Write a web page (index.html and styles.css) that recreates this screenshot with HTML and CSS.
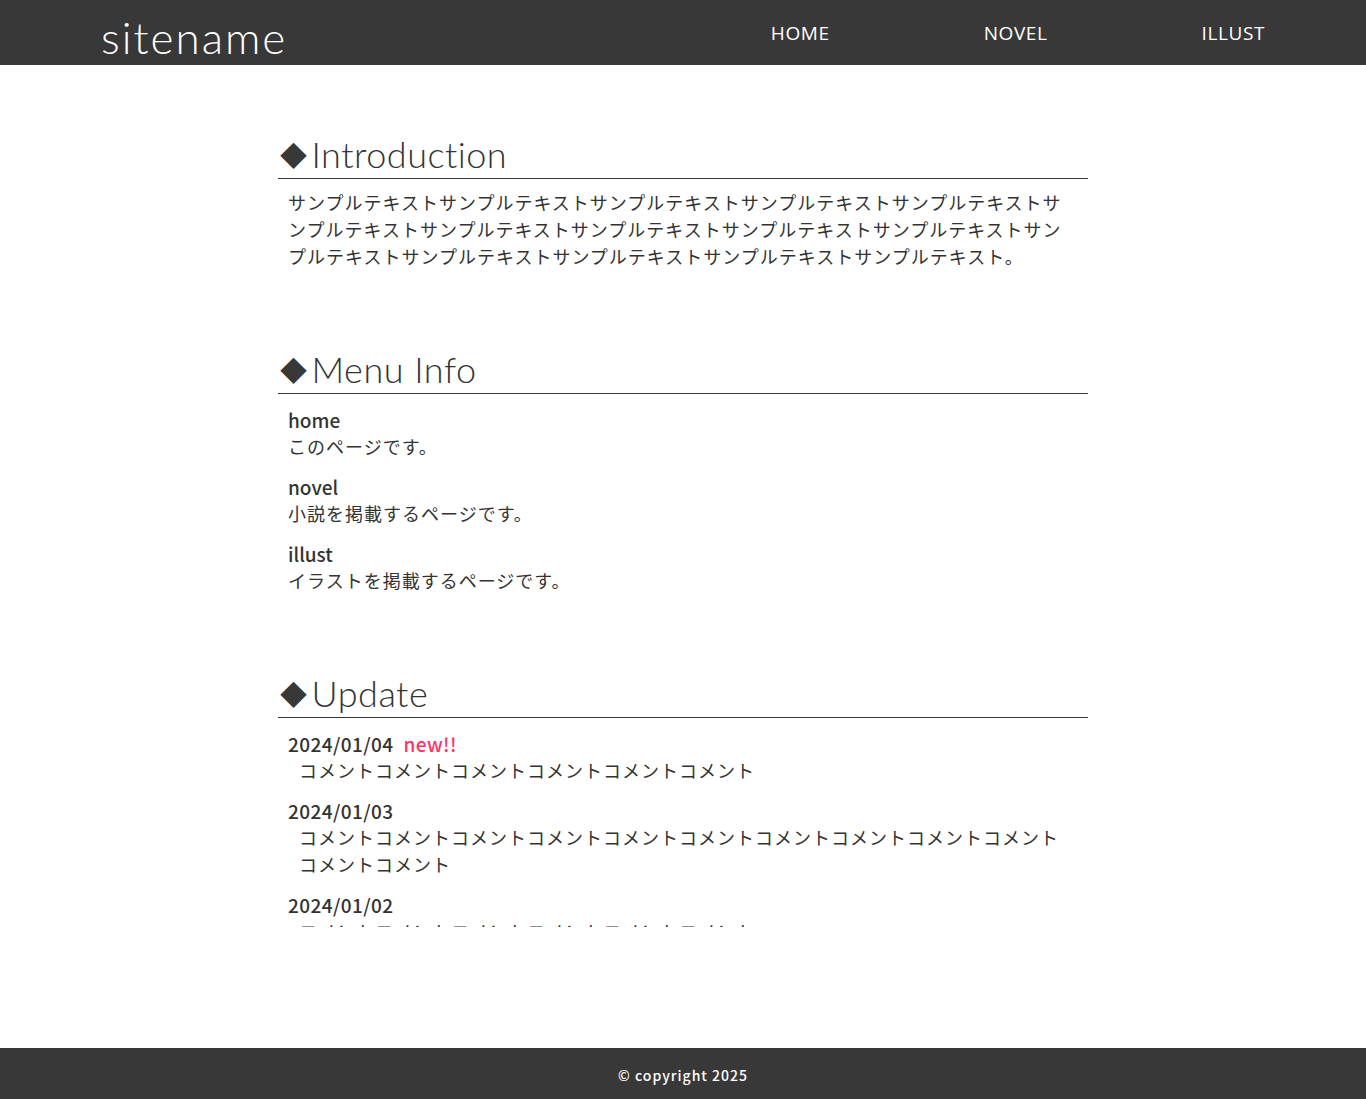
FILE: index.html
```html
<!DOCTYPE html>
<html lang="ja">
<head>
<meta charset="utf-8">
<title>sitename</title>
<link rel="stylesheet" href="styles.css">
</head>
<body>
<header class="site-header">
  <div class="logo">sitename</div>
  <nav class="gnav">
    <a href="#">HOME</a>
    <a href="#">NOVEL</a>
    <a href="#">ILLUST</a>
  </nav>
</header>
<main class="main">
  <section class="sec">
    <h2 class="sec-title"><span class="mark">◆</span>Introduction</h2>
    <p class="intro">サンプルテキストサンプルテキストサンプルテキストサンプルテキストサンプルテキストサンプルテキストサンプルテキストサンプルテキストサンプルテキストサンプルテキストサンプルテキストサンプルテキストサンプルテキストサンプルテキストサンプルテキスト。</p>
  </section>
  <section class="sec">
    <h2 class="sec-title"><span class="mark">◆</span>Menu Info</h2>
    <dl class="menu">
      <div class="item"><dt>home</dt><dd>このページです。</dd></div>
      <div class="item"><dt>novel</dt><dd>小説を掲載するページです。</dd></div>
      <div class="item"><dt>illust</dt><dd>イラストを掲載するページです。</dd></div>
    </dl>
  </section>
  <section class="sec">
    <h2 class="sec-title"><span class="mark">◆</span>Update</h2>
    <div class="updates">
      <div class="item"><div class="date">2024/01/04<span class="new">new!!</span></div><div class="comment">コメントコメントコメントコメントコメントコメント</div></div>
      <div class="item"><div class="date">2024/01/03</div><div class="comment">コメントコメントコメントコメントコメントコメントコメントコメントコメントコメントコメントコメント</div></div>
      <div class="item"><div class="date">2024/01/02</div><div class="comment">コメントコメントコメントコメントコメントコメント</div></div>
    </div>
  </section>
</main>
<footer class="site-footer">© copyright 2025</footer>
</body>
</html>
```
FILE: styles.css
```css
html, body { margin: 0; padding: 0; }
body {
  font-family: "Noto Sans CJK JP", "Noto Sans", sans-serif;
  color: #333;
  background: #fff;
  min-height: 100vh;
  display: flex;
  flex-direction: column;
}
.site-header {
  height: 65px;
  background: #383838;
  display: flex;
  align-items: center;
  justify-content: space-between;
  padding: 0 101px;
  flex-shrink: 0;
}
.logo {
  color: #fff;
  font-family: "Lato", "Noto Sans CJK JP", sans-serif;
  font-size: 44px;
  font-weight: 300;
  letter-spacing: 2px;
  line-height: 1;
  margin-top: 8px;
}
.gnav {
  display: flex;
  gap: 154px;
}
.gnav a {
  color: #fff;
  text-decoration: none;
  font-family: "Open Sans", "Noto Sans", sans-serif;
  font-size: 19px;
  font-weight: 500;
  letter-spacing: 0.6px;
}
.main {
  flex: 1;
  width: 810px;
  margin: 0 auto;
  padding-top: 70px;
}
.sec { margin-bottom: 80px; }
.sec-title {
  margin: 0;
  font-family: "Lato", "Noto Sans CJK JP", sans-serif;
  font-size: 36px;
  font-weight: 300;
  line-height: 38px;
  padding: 0 0 4px 2px;
  border-bottom: 1px solid #383838;
  color: #333;
  letter-spacing: 0.5px;
}
.mark {
  font-family: "Noto Sans CJK JP", sans-serif;
  font-size: 27px;
  display: inline-block;
  vertical-align: 2px;
  margin-right: 4px;
  color: #383838;
}
.intro {
  margin: 10px 0 0;
  padding: 0 10px;
  font-size: 18px;
  line-height: 27px;
  letter-spacing: 1px;
}
.menu { margin: 12px 0 0; padding: 0 10px; }
.item + .item { margin-top: 13px; }
.menu dt {
  font-size: 19px;
  font-weight: 500;
  line-height: 27px;
}
.menu dd {
  margin: 0;
  font-size: 18px;
  line-height: 27px;
  letter-spacing: 1px;
}
.updates {
  height: 197px;
  overflow: hidden;
  margin-top: 12px;
  padding: 0 10px;
}
.date {
  font-size: 19px;
  font-weight: 500;
  line-height: 27px;
  letter-spacing: 0.4px;
}
.new {
  color: #ff3366;
  margin-left: 10px;
}
.comment {
  padding: 0 11px;
  font-size: 18px;
  line-height: 27px;
  letter-spacing: 1px;
}
.site-footer {
  height: 51px;
  background: #383838;
  color: #fff;
  display: flex;
  align-items: center;
  justify-content: center;
  font-size: 14px;
  font-weight: 500;
  letter-spacing: 1px;
  padding-top: 3px;
  box-sizing: border-box;
  flex-shrink: 0;
}
```
